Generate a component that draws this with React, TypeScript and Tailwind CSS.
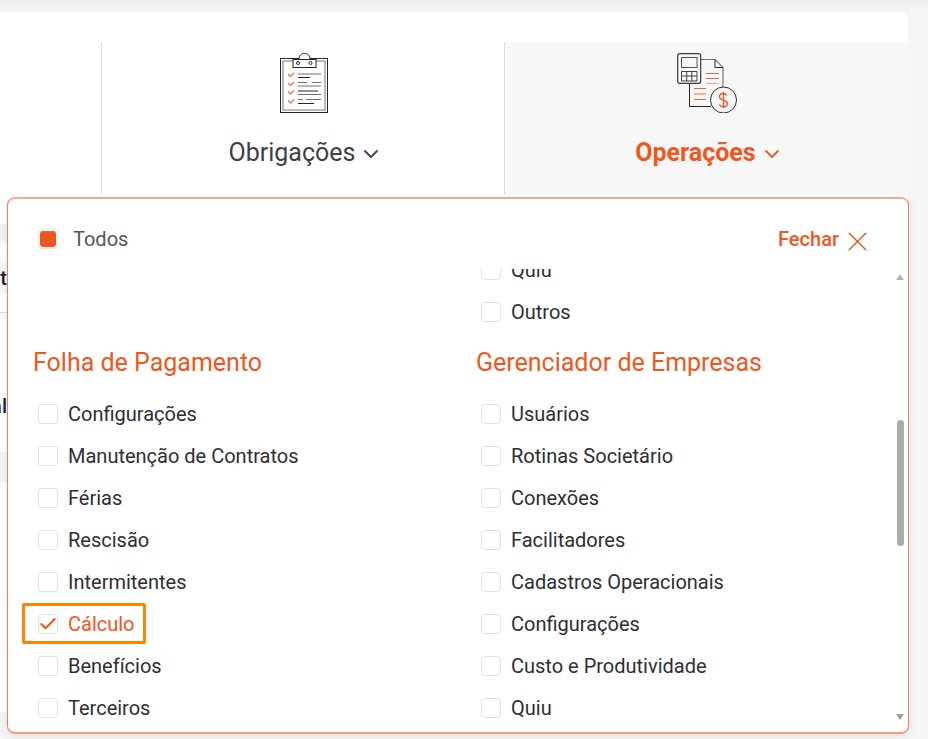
import React from "react";
import { ChevronDown, X, Check } from "lucide-react";

const ORANGE = "text-[#ee5720]";

const folhaItems = [
  "Configurações",
  "Manutenção de Contratos",
  "Férias",
  "Rescisão",
  "Intermitentes",
  "Cálculo",
  "Benefícios",
  "Terceiros",
];

const gerenciadorItems = [
  "Usuários",
  "Rotinas Societário",
  "Conexões",
  "Facilitadores",
  "Cadastros Operacionais",
  "Configurações",
  "Custo e Produtividade",
  "Quiu",
];

const ClipboardIcon = () => (
  <svg className="ml-[2px]" width="48" height="60" viewBox="0 0 48 60" fill="none">
    <rect x="0.5" y="5.5" width="47" height="54" stroke="#26262b" />
    <rect x="3" y="8" width="42" height="49" stroke="#8a8a8a" strokeWidth="1.2" />
    <path d="M19 6.5C19 2.5 21 .5 24.5 .5S30 2.5 30 6.5" stroke="#26262b" fill="#fff" />
    <rect x="13" y="6.5" width="23" height="8" fill="#fff" stroke="#26262b" />
    <circle cx="18" cy="10" r="1.5" stroke="#26262b" />
    <circle cx="30.5" cy="10" r="1.5" stroke="#26262b" />
    <g stroke="#f0683a" strokeWidth="1.2">
      <path d="M8 21l2.5 2.5 3.5-3.5" />
      <path d="M8 30l2.5 2.5 3.5-3.5" />
      <path d="M8 38.500l2.500 2.500 3.500-3.500" />
      <path d="M8 47.500l2.500 2.500 3.500-3.500" />
    </g>
    <g stroke="#26262b">
      <path d="M18 24.500h12M18 38h20M18 50.500h16" />
    </g>
    <g stroke="#6e6e6e">
      <path d="M18 21h23M18 29.500h9M32 29.500h9M18 33h23M18 41.500h23M18 46.500h5M26 46.500h15" />
    </g>
  </svg>
);

const CalcDocIcon = () => (
  <svg width="60" height="60" viewBox="0 0 60 60" fill="none">
    <path d="M24 6.500h14l8 8V34" stroke="#77777a" strokeWidth="1.2" />
    <path d="M38 6.500v8h8" stroke="#26262b" />
    <path d="M12.500 30.500V53.500H34" stroke="#26262b" />
    <rect x="0.7" y="0.700" width="23" height="29.600" rx="2" fill="#f7f7f7" stroke="#3a3a3e" strokeWidth="1.200" />
    <rect x="4.500" y="4.500" width="15.500" height="10" stroke="#555" />
    <path d="M4.500 18.500h15.500v9.500H4.500zM9.700 18.500v9.500M14.800 18.500v9.500M4.500 23h15.500" stroke="#444" />
    <path d="M29 20.500h13M29 25.500h13" stroke="#f26a3c" />
    <path d="M29 30.500h13" stroke="#f7a58a" />
    <path d="M17 35.500h12M17 41h12M17 46.500h12" stroke="#f26a3c" />
    <circle cx="46.500" cy="47" r="13" fill="#f7f7f7" stroke="#2f2f33" />
    <path d="M46.500 39v16M50 42.500c-1-1.500-2-2-3.500-2-2.500 0-4 1.500-4 3.300 0 4.500 8 2.500 8 6.700 0 2-1.800 3.300-4 3.300-2 0-3.500-.8-4.300-2.300" stroke="#ee5720" strokeWidth="1.300" />
  </svg>
);

const CheckRow = ({ label, checked = false }: { label: string; checked?: boolean }) => (
  <div className="relative flex h-[42px] items-center pl-[5px]">
    {checked && (
      <div className="absolute left-[-11px] top-0 h-[41px] w-[124px] rounded-[2px] border-[3px] border-[#ff8500]" />
    )}
    <span className="flex h-5 w-5 items-center justify-center rounded-[4px] border border-[#e2e2e2] bg-white">
      {checked && <Check className="h-5 w-5 shrink-0 text-[#ee5720]" strokeWidth={2.5} />}
    </span>
    <span className={`ml-[10px] text-[20px] ${checked ? ORANGE : "text-[#2e2e33]"}`}>{label}</span>
  </div>
);

const Section = ({ title, items }: { title: string; items: string[] }) => (
  <div className="w-[443px] shrink-0">
    <h3 className={`mt-[10px] mb-[10px] h-10 text-[25px] leading-10 font-normal ${ORANGE}`}>{title}</h3>
    {items.map((item) => (
      <CheckRow key={item} label={item} checked={title === "Folha de Pagamento" && item === "Cálculo"} />
    ))}
  </div>
);

export default function App() {
  return (
    <div className="relative h-[739px] w-[928px] overflow-hidden bg-[#f4f5f6] font-['Roboto',sans-serif]">
      <div className="h-3 bg-gradient-to-b from-[#eeefef] to-[#f4f5f6]" />

      {/* top card with the module tabs */}
      <div className="h-[700px] w-[908px] rounded-r-lg bg-white pt-[30px]">
        <div className="flex h-[152px]">
          <div className="w-[102px] border-r border-[#dcdcdc]" />
          <div className="flex w-[403px] flex-col items-center border-r border-[#dcdcdc] pt-[11px]">
            <ClipboardIcon />
            <div className="mt-[25px] flex items-center gap-[10px] text-[25px] leading-[30px] text-[#3f3f46]">
              Obrigações
              <ChevronDown className="mx-[-6px] mt-[1px] h-6 w-6" strokeWidth={1.8} />
            </div>
          </div>
          <div className="flex flex-1 flex-col items-center bg-[#f7f7f7] pt-[11px]">
            <CalcDocIcon />
            <div className={`mt-[25px] flex items-center gap-[10px] text-[25px] leading-[30px] font-bold ${ORANGE}`}>
              Operações
              <ChevronDown className="mx-[-6px] mt-[1px] h-6 w-6" strokeWidth={1.8} />
            </div>
          </div>
        </div>
        <div className="mt-[30px] h-[18px] w-[8px] bg-[#f3f3f3]" />
        <div className="mt-[20px] flex h-[31px] w-[7px] items-center justify-end overflow-hidden bg-[#f6f6f6] pt-[1px] text-[20px] font-medium text-[#1c1c3a]">
          t
        </div>
        <div className="mt-[19px] h-px w-[8px] bg-[#dedede]" />
        <div className="mt-[83px] flex h-5 w-[7px] justify-end overflow-hidden text-[20px] leading-5 font-medium whitespace-nowrap text-[#1c1c3a]">
          al
        </div>
        <div className="mt-[36px] h-[30px] w-[8px] bg-[#f5f5f5]" />
      </div>

      {/* dropdown panel over the tabs */}
      <div className="absolute top-[197px] left-[7px] flex h-[537px] w-[902px] flex-col rounded-lg border border-t-2 border-b-2 border-[#f47f55] border-t-[#f9a98e] border-b-[#f39a7c] bg-white shadow-[0_2px_10px_rgba(0,0,0,0.08)]">
        <div className="flex h-[70px] shrink-0 items-start justify-between pt-[30px] pr-[42px] pl-[30px]">
          <div className="flex h-5 items-center">
            <span className="flex h-5 w-5 items-center justify-center rounded-[4px] border border-[#e6e6e6] bg-white">
              <span className="h-4 w-4 rounded-[3px] bg-[#ee5720]" />
            </span>
            <span className="ml-[15px] text-[20px] text-[#55555c]">Todos</span>
          </div>
          <button type="button" className={`flex h-5 items-center gap-[10px] text-[20px] font-medium ${ORANGE}`}>
            Fechar
            <X className="mx-[-8px] mt-[4px] h-[33px] w-[33px]" strokeWidth={1.1} />
          </button>
        </div>

        <div className="flex min-h-0 flex-1">
          <div className="min-h-0 flex-1 overflow-hidden pl-[25px]">
            <div className="mt-[-20px] flex">
              <div className="w-[443px] shrink-0" />
              <div className="w-[443px] shrink-0">
                <CheckRow label="Quiu" />
                <CheckRow label="Outros" />
              </div>
            </div>
            <div className="flex">
              <Section title="Folha de Pagamento" items={folhaItems} />
              <Section title="Gerenciador de Empresas" items={gerenciadorItems} />
            </div>
          </div>

          {/* scrollbar */}
          <div className="flex w-[14px] shrink-0 flex-col items-center pr-[2px] pb-[12px]">
            <span className="mt-[5px] h-0 w-0 border-x-[4.5px] border-b-[6px] border-x-transparent border-b-[#b4b4b4]" />
            <span className="mt-[140px] h-[126px] w-[7px] rounded-full bg-[#ababab]" />
            <span className="mt-auto h-0 w-0 border-x-[4.5px] border-t-[6px] border-x-transparent border-t-[#a0a0a0]" />
          </div>
        </div>
      </div>
    </div>
  );
}
